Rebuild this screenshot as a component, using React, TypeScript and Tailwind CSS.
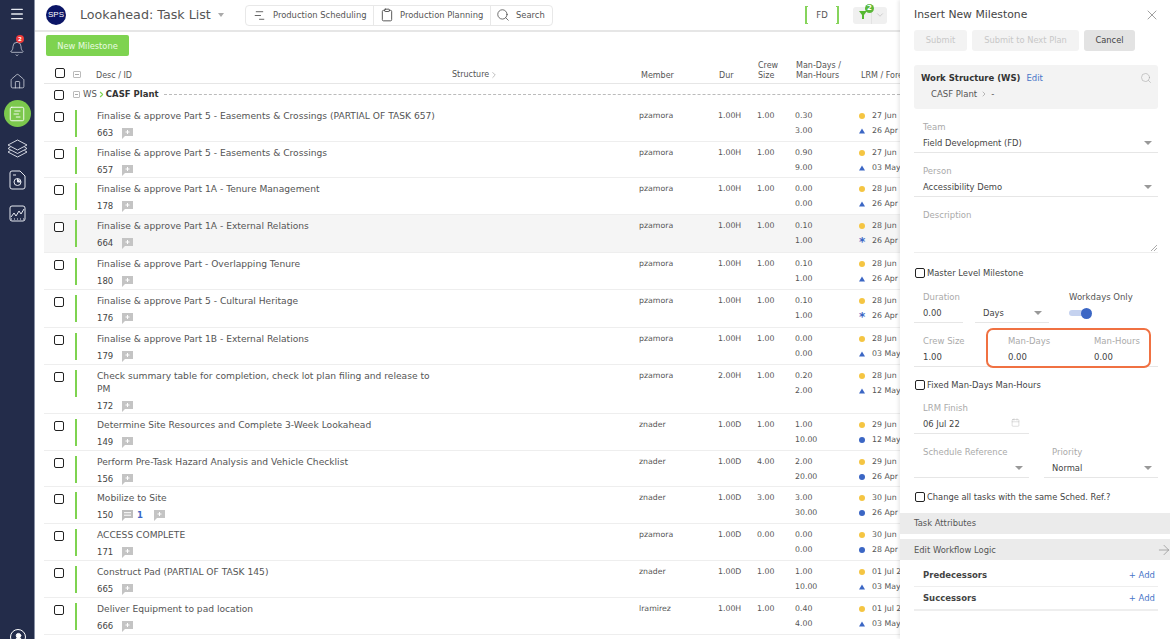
import { ArrowRight, Bell, Calendar, ChartNoAxesGantt, ChevronDown, ChevronRight, Clipboard, House, Menu, Search, SquareChartGantt, UserRound, X } from "lucide-react";

type Task = {
  name: string;
  id: string;
  member: string;
  dur: string;
  crew: string;
  md: string;
  mh: string;
  lrm: string;
  fore: string;
  mark: "tri" | "dot" | "star";
  h: string;
  comments?: number;
  active?: boolean;
};

const tasks: Task[] = [
  { name: "Finalise & approve Part 5 - Easements & Crossings (PARTIAL OF TASK 657)", id: "663", member: "pzamora", dur: "1.00H", crew: "1.00", md: "0.30", mh: "3.00", lrm: "27 Jun", fore: "26 Apr", mark: "tri", h: "h-[37px]" },
  { name: "Finalise & approve Part 5 - Easements & Crossings", id: "657", member: "pzamora", dur: "1.00H", crew: "1.00", md: "0.90", mh: "9.00", lrm: "27 Jun", fore: "03 May", mark: "tri", h: "h-[36px]" },
  { name: "Finalise & approve Part 1A - Tenure Management", id: "178", member: "pzamora", dur: "1.00H", crew: "1.00", md: "0.00", mh: "0.00", lrm: "28 Jun", fore: "26 Apr", mark: "tri", h: "h-[37px]" },
  { name: "Finalise & approve Part 1A - External Relations", id: "664", member: "pzamora", dur: "1.00H", crew: "1.00", md: "0.10", mh: "1.00", lrm: "28 Jun", fore: "26 Apr", mark: "star", h: "h-[38px]", active: true },
  { name: "Finalise & approve Part - Overlapping Tenure", id: "180", member: "pzamora", dur: "1.00H", crew: "1.00", md: "0.10", mh: "1.00", lrm: "28 Jun", fore: "26 Apr", mark: "tri", h: "h-[37px]" },
  { name: "Finalise & approve Part 5 - Cultural Heritage", id: "176", member: "pzamora", dur: "1.00H", crew: "1.00", md: "0.10", mh: "1.00", lrm: "28 Jun", fore: "26 Apr", mark: "star", h: "h-[38px]" },
  { name: "Finalise & approve Part 1B - External Relations", id: "179", member: "pzamora", dur: "1.00H", crew: "1.00", md: "0.00", mh: "0.00", lrm: "28 Jun", fore: "03 May", mark: "tri", h: "h-[37px]" },
  { name: "Check summary table for completion, check lot plan filing and release to PM", id: "172", member: "pzamora", dur: "2.00H", crew: "1.00", md: "0.20", mh: "2.00", lrm: "28 Jun", fore: "12 May", mark: "tri", h: "h-[49px]" },
  { name: "Determine Site Resources and Complete 3-Week Lookahead", id: "149", member: "znader", dur: "1.00D", crew: "1.00", md: "1.00", mh: "10.00", lrm: "29 Jun", fore: "12 May", mark: "dot", h: "h-[37px]" },
  { name: "Perform Pre-Task Hazard Analysis and Vehicle Checklist", id: "156", member: "znader", dur: "1.00D", crew: "4.00", md: "2.00", mh: "20.00", lrm: "29 Jun", fore: "26 Apr", mark: "dot", h: "h-[36px]" },
  { name: "Mobilize to Site", id: "150", member: "znader", dur: "1.00D", crew: "3.00", md: "3.00", mh: "30.00", lrm: "30 Jun", fore: "26 Apr", mark: "dot", h: "h-[37px]", comments: 1 },
  { name: "ACCESS COMPLETE", id: "171", member: "pzamora", dur: "1.00D", crew: "0.00", md: "0.00", mh: "0.00", lrm: "30 Jun", fore: "28 Apr", mark: "dot", h: "h-[37px]" },
  { name: "Construct Pad (PARTIAL OF TASK 145)", id: "665", member: "znader", dur: "1.00D", crew: "1.00", md: "1.00", mh: "10.00", lrm: "01 Jul 22", fore: "03 May", mark: "tri", h: "h-[37px]" },
  { name: "Deliver Equipment to pad location", id: "666", member: "lramirez", dur: "1.00H", crew: "1.00", md: "0.40", mh: "4.00", lrm: "01 Jul 22", fore: "03 May", mark: "tri", h: "h-[37px]" },
];

function Check({ className = "" }: { className?: string }) {
  return <span className={`block w-[10px] h-[10px] shrink-0 rounded-[2px] border-[1.5px] border-[#222] bg-white ${className}`} />;
}

function AddNote() {
  return (
    <svg width="11" height="11" viewBox="0 0 11 11" className="shrink-0">
      <path d="M0 0h11v8H3l-3 3z" fill="#c4c4c4" />
      <path d="M5.5 2v4M3.5 4h4" stroke="#fff" strokeWidth="1" />
    </svg>
  );
}

function Note() {
  return (
    <svg width="11" height="11" viewBox="0 0 11 11" className="shrink-0">
      <path d="M0 0h11v8H3l-3 3z" fill="#bdbdbd" />
      <path d="M2 2.7h7M2 5.2h7" stroke="#fff" strokeWidth="1" />
    </svg>
  );
}

function Mark({ type }: { type: Task["mark"] }) {
  if (type === "star") return <span className="w-[6px] text-[12px] leading-[6px] pt-[3px] font-bold text-[#3b66c4] mr-[7px]">*</span>;
  if (type === "dot") return <span className="w-[6px] h-[6px] rounded-full bg-[#3b66c4] mr-[7px]" />;
  return (
    <svg width="6" height="6" viewBox="0 0 6 6" className="mr-[7px]">
      <path d="M3 .5 6 5.5H0z" fill="#3b66c4" />
    </svg>
  );
}

function TaskRow({ t }: { t: Task }) {
  return (
    <div className={`flex shrink-0 border-b border-[#eeeeee] ${t.h} ${t.active ? "bg-[#f5f5f5]" : ""}`}>
      <div className="w-[31px] pl-[10px] pt-[7px] shrink-0"><Check /></div>
      <div className="w-[22px] shrink-0 pt-[5px]"><div className="w-[2px] h-[27px] bg-[#7ed350]" /></div>
      <div className="w-[542px] shrink-0">
        <div className="w-[345px] pt-[5px] text-[9.15px] leading-[13px] text-[#555]">{t.name}</div>
        <div className="flex items-center h-[16px] mt-[2px] text-[8.5px] text-[#444]">
          <span className="w-[25px]">{t.id}</span>
          {t.comments ? (
            <span className="flex items-center mr-[11px]">
              <Note />
              <span className="ml-[4px] text-[#3b66c4] font-bold">{t.comments}</span>
            </span>
          ) : null}
          <AddNote />
        </div>
      </div>
      <div className="w-[79px] shrink-0 pt-[4px] text-[7.8px] leading-[14px] text-[#555]">{t.member}</div>
      <div className="w-[39px] shrink-0 pt-[4px] text-[7.8px] leading-[14px] text-[#555]">{t.dur}</div>
      <div className="w-[38px] shrink-0 pt-[4px] text-[7.8px] leading-[14px] text-[#555]">{t.crew}</div>
      <div className="w-[64px] shrink-0 pt-[4px] text-[7.8px] leading-[14.5px] text-[#555]">
        <div>{t.md}</div>
        <div>{t.mh}</div>
      </div>
      <div className="shrink-0 pt-[4px] text-[7.8px] leading-[14.5px] text-[#555] whitespace-nowrap">
        <div className="flex items-center"><span className="w-[6px] h-[6px] rounded-full bg-[#f5c542] mr-[7px]" />{t.lrm}</div>
        <div className="flex items-center"><Mark type={t.mark} />{t.fore}</div>
      </div>
    </div>
  );
}

function Field({ label, value, caret, className = "" }: { label: string; value?: string; caret?: boolean; className?: string }) {
  return (
    <div className={`border-b border-[#e6e6e6] ${className}`}>
      <div className="text-[8.5px] leading-[12px] text-[#aaa]">{label}</div>
      <div className="flex items-center justify-between h-[18px] mt-[1px] text-[8.4px] text-[#444]">
        <span>{value}</span>
        {caret ? <span className="w-0 h-0 mr-[6px] border-x-[4px] border-x-transparent border-t-[4px] border-t-[#999]" /> : null}
      </div>
    </div>
  );
}

function Layers() {
  return (
    <svg width="21" height="21" viewBox="0 0 21 21" fill="none" stroke="#e6e9f0" strokeWidth="0.9">
      <path d="M10.5 1 20 6l-9.500 5L1 6z" />
      <path d="M3.500 8 1 9.500l9.500 5 9.500-5L17.500 8" />
      <path d="M3.500 11.500 1 13l9.500 5 9.500-5-2.500-1.500" />
    </svg>
  );
}

function DocIcon() {
  return (
    <svg width="17" height="20" viewBox="0 0 17 20" fill="none" stroke="#e6e9f0" strokeWidth="1">
      <path d="M3 1h8l5 5v11a2 2 0 0 1-2 2H3a2 2 0 0 1-2-2V3a2 2 0 0 1 2-2z" />
      <path d="M4 5h3" />
      <circle cx="8.500" cy="12" r="3.500" />
      <path d="M8.500 8.500V12h3.500" fill="#e6e9f0" />
    </svg>
  );
}

function ChartIcon() {
  return (
    <svg width="17" height="17" viewBox="0 0 17 17" fill="none" stroke="#e6e9f0" strokeWidth="1">
      <rect x="1" y="1" width="15" height="15" rx="2" />
      <path d="M2 12l3-4 2 3 3-5 2 3 3-5" />
      <path d="M2 14h1M5 14h1M8 14h1M11 14h1M14 14h1" />
    </svg>
  );
}

function Sidebar() {
  return (
    <div className="w-[35px] shrink-0 h-full bg-[#232c4a] border-r border-[#8a92a6] flex flex-col items-center relative">
      <Menu size={16} className="text-[#e6e9f0] mt-[6px]" />
      <div className="relative mt-[19px] h-[18px]">
        <Bell size={16} strokeWidth={1} className="text-[#e6e9f0]" />
        <span className="absolute top-[-6px] left-[7px] w-[8px] h-[8px] rounded-full bg-[#ee3b3b] text-white text-[5.500px] leading-[8px] text-center font-bold">2</span>
      </div>
      <House size={17} strokeWidth={1} className="text-[#e6e9f0] mt-[14px]" />
      <div className="w-[27px] h-[27px] mt-[10px] rounded-full bg-[#7cc84d] flex items-center justify-center">
        <SquareChartGantt size={18} strokeWidth={1.2} className="text-white" />
      </div>
      <div className="mt-[12px]"><Layers /></div>
      <div className="mt-[10px]"><DocIcon /></div>
      <div className="mt-[15px]"><ChartIcon /></div>
      <div className="absolute bottom-[-6px] left-[10px] w-[16px] h-[16px] rounded-full border border-white flex items-center justify-center">
        <UserRound size={11} fill="#fff" className="text-white" />
      </div>
    </div>
  );
}

function TopBar() {
  return (
    <div className="h-[32px] shrink-0 border-b-2 border-[#e6e6e6] flex items-center relative">
      <div className="ml-[11px] shrink-0 w-[20px] h-[20px] rounded-full bg-[#0b1566] text-white text-[8px] leading-[20px] text-center font-['Liberation_Sans',sans-serif]">SPS</div>
      <div className="ml-[14px] w-[130px] shrink-0 text-[12.7px] text-[#555] whitespace-nowrap">Lookahead: Task List</div>
      <span className="ml-[8px] shrink-0 w-0 h-0 border-x-[3.500px] border-x-transparent border-t-[4px] border-t-[#aaa]" />
      <div className="ml-[21px] shrink-0 h-[21px] w-[308px] flex border border-[#e8e8e8] rounded-[4px] text-[8.4px] text-[#555] whitespace-nowrap">
        <div className="w-[128px] flex items-center border-r border-[#e8e8e8] pl-[7px]">
          <ChartNoAxesGantt size={13} strokeWidth={1.5} className="text-[#444]" />
          <span className="ml-[7px]">Production Scheduling</span>
        </div>
        <div className="w-[117px] flex items-center border-r border-[#e8e8e8] pl-[6px]">
          <Clipboard size={14} strokeWidth={1.5} className="text-[#444]" />
          <span className="ml-[6px]">Production Planning</span>
        </div>
        <div className="flex items-center pl-[5px]">
          <Search size={14} strokeWidth={1.3} className="text-[#444]" />
          <span className="ml-[6px]">Search</span>
        </div>
      </div>
      <div className="ml-[252px] shrink-0 w-[34px] h-[18px] flex text-[8.5px] leading-[18px] text-[#555]">
        <span className="w-[3px] border-l-2 border-y border-[#86d45c]" />
        <span className="flex-1 text-center">FD</span>
        <span className="w-[3px] border-r-2 border-y border-[#86d45c]" />
      </div>
      <div className="ml-[14px] shrink-0 w-[34px] h-[17px] rounded-[3px] bg-[#f0f0f0] flex items-center relative">
        <svg width="8" height="8" viewBox="0 0 8 8" className="ml-[6px]"><path d="M0 0h8L5 4v4H3V4z" fill="#55b82f" /></svg>
        <span className="ml-[4px] h-full border-l border-[#e3e3e3]" />
        <ChevronDown size={10} strokeWidth={1} className="text-[#999] ml-[3px]" />
        <span className="absolute top-[-3px] left-[12px] w-[9px] h-[9px] rounded-full bg-[#5cb83a] text-white text-[7px] leading-[9px] text-center font-bold">2</span>
      </div>
    </div>
  );
}

function Panel() {
  return (
    <div className="w-[270px] shrink-0 h-full bg-white shadow-[-2px_0_3px_rgba(0,0,0,0.08)] flex flex-col z-10">
      <div className="h-[30px] shrink-0 pl-[14px] pr-[10px] flex items-center justify-between text-[10.8px] text-[#444]">
        Insert New Milestone
        <X size={16} strokeWidth={1.2} className="text-[#888]" />
      </div>
      <div className="h-[21px] shrink-0 mx-[14px] flex gap-[5px] text-[8.3px] whitespace-nowrap">
        <div className="w-[53px] rounded-[3px] bg-[#f3f3f3] text-[#c8c8c8] leading-[21px] text-center">Submit</div>
        <div className="w-[107px] rounded-[3px] bg-[#f3f3f3] text-[#c8c8c8] leading-[21px] text-center">Submit to Next Plan</div>
        <div className="w-[51px] rounded-[3px] bg-[#e3e3e3] text-[#444] leading-[21px] text-center">Cancel</div>
      </div>
      <div className="h-[44px] shrink-0 mt-[14px] mx-[12px] ml-[14px] rounded-[3px] bg-[#f3f3f3] pl-[7px] pr-[6px] pt-[7px] text-[8.5px]">
        <div className="flex items-center justify-between">
          <div><span className="font-bold text-[#333]">Work Structure (WS)</span><span className="ml-[6px] text-[#4a76c8]">Edit</span></div>
          <Search size={12} strokeWidth={1.2} className="text-[#aaa]" />
        </div>
        <div className="flex items-center mt-[3px] ml-[10px] text-[#555]">CASF Plant<ChevronRight size={8} className="mx-[3px] text-[#999]" />-</div>
      </div>
      <Field label="Team" value="Field Development (FD)" caret className="h-[32px] mx-[12px] ml-[14px] mt-[12px] pl-[9px] shrink-0" />
      <Field label="Person" value="Accessibility Demo" caret className="h-[32px] mx-[12px] ml-[14px] mt-[12px] pl-[9px] shrink-0" />
      <div className="h-[44px] shrink-0 mx-[12px] ml-[14px] mt-[12px] pl-[9px] border-b border-[#eeeeee] text-[8.5px] leading-[12px] text-[#aaa] relative">
        Description
        <svg width="6" height="6" viewBox="0 0 6 6" className="absolute right-[1px] bottom-[1px]"><path d="M0 6l6-6M3 6l3-3" stroke="#888" strokeWidth="0.7" /></svg>
      </div>
      <div className="h-[12px] shrink-0 mt-[14px] ml-[15px] flex items-center gap-[2px] text-[8.4px] text-[#444]"><Check />Master Level Milestone</div>
      <div className="flex shrink-0 mt-[12px] ml-[14px]">
        <Field label="Duration" value="0.00" className="w-[49px] h-[32px] pl-[9px]" />
        <div className="ml-[12px] w-[74px] h-[32px] border-b border-[#e6e6e6] flex items-end">
          <div className="flex items-center justify-between h-[18px] w-full pl-[8px] text-[8.4px] text-[#444]">Days<span className="w-0 h-0 mr-[7px] border-x-[4px] border-x-transparent border-t-[4px] border-t-[#999]" /></div>
        </div>
        <div className="ml-[20px] text-[8.5px] leading-[12px] text-[#555]">
          Workdays Only
          <div className="relative mt-[4px] w-[23px] h-[12px]">
            <span className="absolute left-0 top-[3px] w-[20px] h-[6px] rounded-full bg-[#c5d2ef]" />
            <span className="absolute right-0 top-[1px] w-[11px] h-[11px] rounded-full bg-[#3b66c4]" />
          </div>
        </div>
      </div>
      <div className="flex shrink-0 relative mt-[12px] mx-[12px] ml-[14px] h-[32px] border-b border-[#e6e6e6] pl-[9px] text-[8.5px]">
        <div className="w-[85px]">
          <div className="leading-[12px] text-[#aaa]">Crew Size</div>
          <div className="leading-[18px] mt-[1px] text-[#444]">1.00</div>
        </div>
        <div className="w-[86px]">
          <div className="leading-[12px] text-[#aaa]">Man-Days</div>
          <div className="leading-[18px] mt-[1px] text-[#444]">0.00</div>
        </div>
        <div>
          <div className="leading-[12px] text-[#aaa]">Man-Hours</div>
          <div className="leading-[18px] mt-[1px] text-[#444]">0.00</div>
        </div>
        <span className="absolute left-[72px] top-[-7px] w-[165px] h-[40px] border-2 border-[#f07142] rounded-[7px]" />
      </div>
      <div className="h-[12px] shrink-0 mt-[12px] ml-[15px] flex items-center gap-[2px] text-[8.4px] text-[#444]"><Check />Fixed Man-Days Man-Hours</div>
      <div className="w-[115px] h-[32px] shrink-0 mt-[11px] ml-[14px] pl-[9px] border-b border-[#e6e6e6] relative">
        <div className="text-[8.5px] leading-[12px] text-[#aaa]">LRM Finish</div>
        <div className="text-[8.4px] leading-[18px] mt-[1px] text-[#444]">06 Jul 22</div>
        <Calendar size={9} strokeWidth={1} className="absolute right-[9px] top-[16px] text-[#aaa]" />
      </div>
      <div className="flex shrink-0 mt-[12px] ml-[14px] mr-[12px] gap-[15px]">
        <Field label="Schedule Reference" caret className="w-[115px] h-[32px] pl-[9px]" />
        <Field label="Priority" value="Normal" caret className="w-[114px] h-[32px] pl-[8px]" />
      </div>
      <div className="h-[12px] shrink-0 mt-[13px] ml-[15px] flex items-center gap-[2px] text-[8.3px] text-[#444] whitespace-nowrap"><Check />Change all tasks with the same Sched. Ref.?</div>
      <div className="h-[21px] shrink-0 mt-[10px] bg-[#ebebeb] pl-[14px] text-[8.4px] leading-[21px] text-[#555]">Task Attributes</div>
      <div className="h-[21px] shrink-0 mt-[5px] bg-[#ebebeb] pl-[14px] pt-[1px] flex items-center justify-between text-[8.4px] text-[#555]">
        Edit Workflow Logic
        <ArrowRight size={16} strokeWidth={1} className="text-[#888] mr-[-2px]" />
      </div>
      <div className="h-[27px] shrink-0 mx-[12px] ml-[14px] pl-[9px] pr-[3px] pt-[4px] border-b border-[#eeeeee] flex items-center justify-between text-[8.5px]">
        <span className="font-bold text-[#444]">Predecessors</span>
        <span className="text-[#4a76c8]">+ Add</span>
      </div>
      <div className="h-[24px] shrink-0 mx-[12px] ml-[14px] pl-[9px] pr-[3px] border-b-2 border-[#eeeeee] flex items-center justify-between text-[8.5px]">
        <span className="font-bold text-[#444]">Successors</span>
        <span className="text-[#4a76c8]">+ Add</span>
      </div>
    </div>
  );
}

export default function App() {
  return (
    <div className="w-[1170px] h-[639px] overflow-hidden flex bg-white font-['DejaVu_Sans',sans-serif]">
      <Sidebar />
      <div className="w-[865px] shrink-0 h-full overflow-hidden flex flex-col">
        <TopBar />
        <div className="pl-[9px] flex flex-col min-h-0 overflow-hidden">
          <div className="h-[21px] w-[83px] mt-[3px] ml-[2px] shrink-0 rounded-[2px] bg-[#7ed350] text-[#eafbe0] text-[8.3px] leading-[22px] text-center">New Milestone</div>
          <div className="h-[28px] shrink-0 flex items-end border-b border-[#e6e6e6] text-[8px] leading-[9.500px] text-[#555] whitespace-nowrap">
            <div className="w-[11px] shrink-0 ml-[11px] mb-[5px]"><Check /></div>
            <span className="ml-[7px] shrink-0 mb-[5px] w-[8px] h-[7px] border border-[#bbb] rounded-[1px] relative"><span className="absolute left-[1px] top-[2px] w-[4px] h-px bg-[#aaa]" /></span>
            <div className="w-[356px] shrink-0 ml-[15px] pb-[3px]">Desc / ID</div>
            <div className="w-[189px] shrink-0 pb-[3px] flex items-center">Structure<ChevronRight size={10} strokeWidth={1.5} className="text-[#999]" /></div>
            <div className="w-[78px] shrink-0 pb-[3px]">Member</div>
            <div className="w-[39px] shrink-0 pb-[3px]">Dur</div>
            <div className="w-[38px] shrink-0 pb-[3px]">Crew<br />Size</div>
            <div className="w-[65px] shrink-0 pb-[3px]">Man-Days /<br />Man-Hours</div>
            <div className="shrink-0 pb-[3px]">LRM / Forecast</div>
          </div>
          <div className="h-[21px] shrink-0 flex items-center text-[8.500px] text-[#555]">
            <div className="w-[20px] pl-[10px] shrink-0"><Check /></div>
            <span className="ml-[9px] shrink-0 w-[7px] h-[7px] border border-[#bbb] rounded-[1px] relative"><span className="absolute left-[1px] top-[2px] w-[3px] h-px bg-[#aaa]" /></span>
            <span className="ml-[3px]">WS</span>
            <ChevronRight size={9} strokeWidth={3} className="text-[#7ed350] shrink-0" />
            <span className="font-bold text-[#333]">CASF Plant</span>
            <span className="ml-[5px] flex-1 border-t border-dashed border-[#bbb]" />
          </div>
          {tasks.map((t) => <TaskRow key={t.id} t={t} />)}
        </div>
      </div>
      <Panel />
    </div>
  );
}
